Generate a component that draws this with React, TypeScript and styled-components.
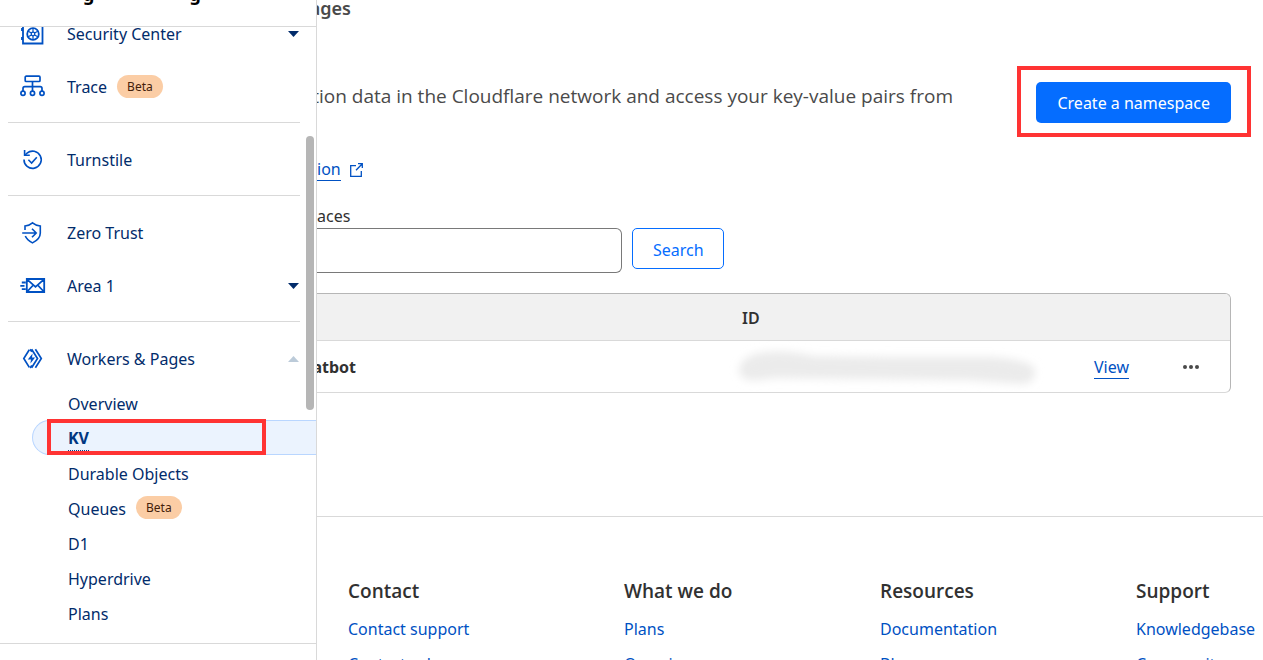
import React from "react";
import styled, { createGlobalStyle, css } from "styled-components";

const color = {
  navy: "#022c6b",
  link: "#0051c3",
  primary: "#056dff",
  text: "#313131",
  muted: "#4a4a4a",
  line: "#d9d9d9",
  mark: "#ff3333",
};

const GlobalStyle = createGlobalStyle`
  *, *::before, *::after { box-sizing: border-box; }
  body {
    margin: 0;
    background: #fff;
    color: ${color.text};
    font: 16px/24px "Noto Sans", "Open Sans", sans-serif;
  }
  button, input { font: inherit; }
  a { text-decoration: none; }
`;

const Shell = styled.div`
  display: grid;
  grid-template-columns: 317px minmax(0, 1fr);
  height: 100vh;
  overflow: hidden;
`;

/* ---------- sidebar ---------- */

const Sidebar = styled.aside`
  position: relative;
  display: flex;
  flex-direction: column;
  min-height: 0;
  border-right: 1px solid ${color.line};
`;

const AccountBar = styled.div`
  display: flex;
  flex: none;
  align-items: flex-start;
  gap: 95px;
  height: 27px;
  padding-left: 83px;
  overflow: hidden;
  border-bottom: 1px solid ${color.line};
  color: #000;
  font-size: 18px;
  font-weight: 700;
  line-height: 0;

  > span { margin-top: -6px; }
`;

const SidebarFoot = styled.div`
  flex: none;
  height: 17px;
  border-top: 1px solid ${color.line};
`;

const Nav = styled.nav`
  display: flex;
  flex: 1;
  flex-direction: column;
  justify-content: flex-end;
  min-height: 0;
  padding-bottom: 13px;
  overflow: hidden;
`;

const Group = styled.div`
  flex: none;
  padding-top: 10px;

  &:not(:last-child) {
    margin: 0 16px 0 8px;
    padding-bottom: 9px;
    border-bottom: 1px solid ${color.line};
  }
  &:last-child > button {
    margin: 0 16px 0 8px;
    width: calc(100% - 24px);
  }
`;

const rowStyle = css`
  display: flex;
  align-items: center;
  width: 100%;
  height: 53px;
  padding: 0 1px 0 12px;
  border: 0;
  background: none;
  color: ${color.navy};
  text-align: left;
`;

const RowLink = styled.a`
  ${rowStyle}
`;

const RowButton = styled.button`
  ${rowStyle}
  cursor: pointer;
`;

const RowLabel = styled.span`
  padding-top: 1px;
`;

const RowIcon = styled.svg`
  flex: none;
  width: 26px;
  height: 26px;
  margin-right: 21px;
  fill: none;
  stroke: ${color.link};
  stroke-width: 1.8;
`;

const Caret = styled.svg<{ $dim?: boolean }>`
  width: 11px;
  height: 6px;
  margin-left: auto;
  fill: ${(p) => (p.$dim ? "#bccbd9" : color.navy)};
`;

const Badge = styled.span`
  margin-left: 10px;
  padding: 0 10px;
  border-radius: 12px;
  background: #fbcda5;
  color: #43200a;
  font-size: 12px;
  line-height: 23px;
`;

const SubList = styled.ul`
  margin: 0;
  padding: 0 0 0 32px;
  list-style: none;
`;

const SubItem = styled.li<{ $active?: boolean }>`
  position: relative;
  display: flex;
  align-items: center;
  height: 35px;
  padding-left: 36px;
  ${(p) =>
    p.$active &&
    css`
      padding-left: 35px;
      border: 1px solid #b9d6ff;
      border-right: 0;
      border-radius: 18px 0 0 18px;
      background: #ebf3fe;
    `}
`;

const SubLink = styled.a<{ $active?: boolean }>`
  padding-top: 2px;
  color: ${color.navy};
  ${(p) =>
    p.$active &&
    css`
      border-bottom: 1px dotted #003681;
      color: #003681;
      font-weight: 700;
    `}
`;

const ScrollThumb = styled.div`
  position: absolute;
  top: 136px;
  right: 2px;
  width: 8px;
  height: 274px;
  border-radius: 4px;
  background: #b6b6b6;
`;

const Highlight = styled.span<{ $inset: string }>`
  position: absolute;
  inset: ${(p) => p.$inset};
  border: 4px solid ${color.mark};
  pointer-events: none;
`;

/* ---------- main ---------- */

const Main = styled.main`
  min-width: 0;
  overflow: hidden;
`;

const Content = styled.div`
  height: 517px;
  padding-right: 32px;
  border-bottom: 1px solid ${color.line};
`;

const Tail = styled.div<{ $width: number }>`
  display: flex;
  justify-content: flex-end;
  width: ${(p) => p.$width}px;
  overflow: hidden;
  white-space: nowrap;
`;

const Crumb = styled(Tail)`
  height: 24px;
  color: ${color.muted};
  font-size: 18px;
  font-weight: 600;
  line-height: 16px;
`;

const Intro = styled.div`
  display: flex;
  align-items: flex-start;
  justify-content: space-between;
  padding-top: 58px;
`;

const Lead = styled.p`
  display: flex;
  justify-content: flex-end;
  width: 636px;
  margin: 0;
  overflow: hidden;
  color: ${color.muted};
  font-family: "Open Sans", "Noto Sans", sans-serif;
  font-size: 19px;
  line-height: 28px;
  white-space: nowrap;
`;

const CreateWrap = styled.div`
  position: relative;
`;

const CreateButton = styled.button`
  display: block;
  height: 41px;
  padding: 1px 21px 0;
  border: 0;
  border-radius: 5px;
  background: ${color.primary};
  color: #fff;
  white-space: nowrap;
`;

const DocRow = styled.div`
  display: flex;
  align-items: center;
  gap: 9px;
  margin-top: 35px;
`;

const TextLink = styled.a`
  border-bottom: 1px solid ${color.link};
  color: ${color.link};
  line-height: 22px;
`;

const External = styled.svg`
  width: 13px;
  height: 14px;
  fill: none;
  stroke: ${color.link};
  stroke-width: 1.3;
`;

const SearchForm = styled.form`
  display: grid;
  grid-template-columns: 305px max-content;
  column-gap: 10px;
  align-items: start;
  margin-top: 23px;
`;

const SearchLabel = styled.label`
  grid-column: 1 / -1;
`;

const SearchInput = styled.input`
  width: 100%;
  height: 45px;
  border: 1px solid #797979;
  border-left: 0;
  border-radius: 0 6px 6px 0;
  background: #fff;
`;

const SearchButton = styled.button`
  height: 41px;
  padding: 2px 19px 0 20px;
  border: 1px solid ${color.primary};
  border-radius: 5px;
  background: #fff;
  color: ${color.primary};
`;

const TableFrame = styled.div`
  margin-top: 20px;
  overflow: hidden;
  border: 1px solid #b6b6b6;
  border-bottom-color: ${color.line};
  border-left: 0;
  border-radius: 0 6px 6px 0;
`;

const Table = styled.table`
  width: 100%;
  table-layout: fixed;
  border-collapse: separate;
  border-spacing: 0;
  text-align: left;

  th, td { padding: 0; }
  thead th {
    height: 47px;
    padding-top: 2px;
    border-bottom: 1px solid ${color.line};
    background: #f1f1f1;
    font-weight: 600;
  }
  tbody th, tbody td { height: 51px; }
  tbody th { padding-top: 1px; font-weight: 700; }
`;

const Smear = styled.svg`
  display: block;
  width: 320px;
  height: 46px;
  margin-left: -6px;
  overflow: visible;
`;

const MoreButton = styled.button`
  display: flex;
  width: 17px;
  padding: 0;
  border: 0;
  background: none;
`;

const FooterGrid = styled.footer`
  display: grid;
  grid-template-columns: 276fr 256fr 256fr 127fr;
  padding: 60px 0 0 31px;
`;

const FooterTitle = styled.h3`
  margin: 0 0 12px;
  font-family: "Open Sans", "Noto Sans", sans-serif;
  font-size: 19px;
  font-weight: 600;
  line-height: 28px;
`;

const FooterLink = styled.a`
  display: block;
  margin-bottom: 11px;
  color: ${color.link};
  white-space: nowrap;
`;

const footer = [
  { title: "Contact", links: ["Contact support", "Contact sales"] },
  { title: "What we do", links: ["Plans", "Overview"] },
  { title: "Resources", links: ["Documentation", "Blog"] },
  { title: "Support", links: ["Knowledgebase", "Community"] },
];

const subItems = [
  { label: "Overview" },
  { label: "KV", active: true },
  { label: "Durable Objects" },
  { label: "Queues", beta: true },
  { label: "D1" },
  { label: "Hyperdrive" },
  { label: "Plans" },
];

const CaretDown = () => (
  <Caret viewBox="0 0 11 6" aria-hidden="true">
    <path d="M0 0h11L5.500 6z" />
  </Caret>
);

export default function App() {
  return (
    <>
      <GlobalStyle />
      <Shell>
        <Sidebar>
          <AccountBar>
            <span>g</span>
            <span>g</span>
          </AccountBar>
          <Nav>
            <Group>
              <RowButton type="button">
                <RowIcon viewBox="0 0 26 26">
                  <path d="M3 3h19.500v19.500H3zM2 7v3M2 16v3" />
                  <circle cx="13" cy="13" r="5.800" />
                  <circle cx="13" cy="13" r="1.800" strokeWidth="1.300" />
                  <path
                    strokeWidth="1.200"
                    d="M13 7.500v3.700M13 14.800v3.700M8.200 10.200l3.200 1.900M14.600 13.900l3.200 1.900M17.800 10.200l-3.200 1.900M11.400 13.900l-3.200 1.900"
                  />
                </RowIcon>
                <RowLabel>Security Center</RowLabel>
                <CaretDown />
              </RowButton>
              <RowLink href="#trace">
                <RowIcon viewBox="0 0 26 26">
                  <g strokeWidth="1.700">
                    <rect x="5.200" y="2.200" width="14.800" height="5.300" rx="1" />
                    <path d="M12.500 7.500v9.500M3 17v-2.500q0-1.800 1.800-1.800h15.400q1.800 0 1.800 1.800V17" />
                    <circle cx="3" cy="19.300" r="2.100" />
                    <circle cx="12.500" cy="19.300" r="2.100" />
                    <circle cx="22" cy="19.300" r="2.100" />
                  </g>
                </RowIcon>
                <RowLabel>Trace</RowLabel>
                <Badge>Beta</Badge>
              </RowLink>
            </Group>
            <Group>
              <RowLink href="#turnstile">
                <RowIcon viewBox="0 0 26 26">
                  <g strokeWidth="1.600">
                    <path d="M4 12.500a8.600 8.600 0 1 0 3-6.300q-.9.700-1.800 1.900" />
                    <path d="M4.600 3v5.200h5.200M8.400 12.800l3.200 3.200 5.200-5.800" />
                  </g>
                </RowIcon>
                <RowLabel>Turnstile</RowLabel>
              </RowLink>
            </Group>
            <Group>
              <RowLink href="#zero-trust">
                <RowIcon viewBox="0 0 26 26">
                  <g strokeWidth="1.600">
                    <path d="M5 10V6q4.500-.4 7.500-3.100 3.200 2.700 7.800 3.100v7q0 6-7.800 9.900-5.500-2.900-7.200-6.900" />
                    <path d="M2.200 13h13.500M12 8.800l4.200 4.200-4.200 4.200" />
                  </g>
                </RowIcon>
                <RowLabel>Zero Trust</RowLabel>
              </RowLink>
              <RowButton type="button">
                <RowIcon viewBox="0 0 26 26">
                  <path d="M6.800 6h17.400v13H6.800zM7.300 6.600l8.200 7.300 8.200-7.300M7.300 18.500l5.600-6M23.700 18.500l-5.600-6" />
                  <path d="M1.800 9.500h4M.300 12.800h4.200M1.800 16.200h4" />
                </RowIcon>
                <RowLabel>Area 1</RowLabel>
                <CaretDown />
              </RowButton>
            </Group>
            <Group>
              <RowButton type="button" aria-expanded="true">
                <RowIcon viewBox="0 0 26 26">
                  <g strokeWidth="1.700">
                    <path d="M9.300 3.800L3.800 12.500l5.500 8.900" />
                    <path d="M10.200 3.200l1.600 2.600M10.200 22l1.600-2.600" />
                    <path d="M11.600 3.200l5.900 9.300-5.900 9.300M15.400 3.200l5.900 9.300-5.900 9.300" />
                  </g>
                  <path d="M12.600 7.500L7.800 13.400H11L10.400 17.600l4.700-6H12z" fill={color.link} stroke="none" />
                </RowIcon>
                <RowLabel>Workers &amp; Pages</RowLabel>
                <Caret $dim viewBox="0 0 11 6" aria-hidden="true">
                  <path d="M0 6h11L5.500 0z" />
                </Caret>
              </RowButton>
              <SubList>
                {subItems.map((item) => (
                  <SubItem key={item.label} $active={item.active}>
                    <SubLink href="#section" $active={item.active}>
                      {item.label}
                    </SubLink>
                    {item.beta && <Badge>Beta</Badge>}
                    {item.active && <Highlight $inset="-2px 50px -1px 14px" />}
                  </SubItem>
                ))}
              </SubList>
            </Group>
          </Nav>
          <SidebarFoot />
          <ScrollThumb />
        </Sidebar>

        <Main>
          <Content>
            <Crumb $width={34}>ages</Crumb>
            <Intro>
              <Lead>
                tion data in the Cloudflare network and access your key-value pairs from
              </Lead>
              <CreateWrap>
                <CreateButton type="button">Create a namespace</CreateButton>
                <Highlight $inset="-16px -20px -14px -19px" />
              </CreateWrap>
            </Intro>
            <DocRow>
              <TextLink href="#documentation">ion</TextLink>
              <External viewBox="0 0 13 14" aria-hidden="true">
                <path d="M6 2.700H.700v10.600h10.600V8M8 .700h4.300V5M12.300.700L6 7.300" />
              </External>
            </DocRow>
            <SearchForm>
              <SearchLabel htmlFor="search">aces</SearchLabel>
              <SearchInput id="search" type="text" />
              <SearchButton type="button">Search</SearchButton>
            </SearchForm>
            <TableFrame>
              <Table>
                <colgroup>
                  <col />
                  <col width="352" />
                  <col width="89" />
                  <col width="47" />
                </colgroup>
                <thead>
                  <tr>
                    <th />
                    <th>ID</th>
                    <th />
                    <th />
                  </tr>
                </thead>
                <tbody>
                  <tr>
                    <th scope="row">
                      <Tail $width={39}>atbot</Tail>
                    </th>
                    <td>
                      <Smear viewBox="0 0 320 46" aria-hidden="true">
                        <defs>
                          <filter id="soft" x="-10%" y="-40%" width="120%" height="180%">
                            <feGaussianBlur stdDeviation="4" />
                          </filter>
                        </defs>
                        <path
                          filter="url(#soft)"
                          fill="#ebebeb"
                          d="M6 18Q14 9 32 8q20-2 46 4l80 1 96 0q34 2 44 10 4 16-12 17l-56-4-194-2q-10 3-24 2-14-4-6-18z"
                        />
                      </Smear>
                    </td>
                    <td>
                      <TextLink href="#view">View</TextLink>
                    </td>
                    <td>
                      <MoreButton type="button" aria-label="More actions">
                        <svg width="17" height="4" viewBox="0 0 17 4" fill="#4a4a4a">
                          <circle cx="2" cy="2" r="2" />
                          <circle cx="8" cy="2" r="2" />
                          <circle cx="14" cy="2" r="2" />
                        </svg>
                      </MoreButton>
                    </td>
                  </tr>
                </tbody>
              </Table>
            </TableFrame>
          </Content>
          <FooterGrid>
            {footer.map((col) => (
              <div key={col.title}>
                <FooterTitle>{col.title}</FooterTitle>
                {col.links.map((label) => (
                  <FooterLink key={label} href="#footer">
                    {label}
                  </FooterLink>
                ))}
              </div>
            ))}
          </FooterGrid>
        </Main>
      </Shell>
    </>
  );
}
